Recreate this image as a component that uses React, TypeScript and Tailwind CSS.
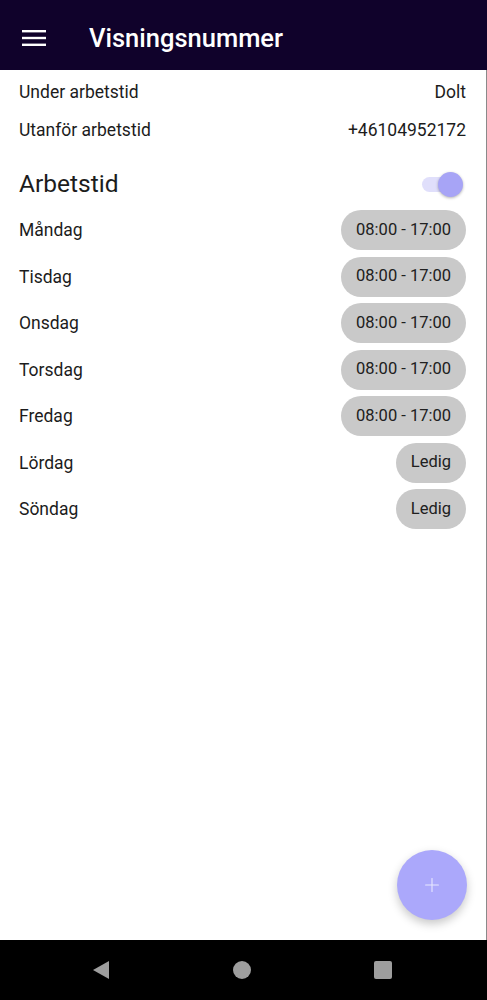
import { Plus } from "lucide-react"

const days = [
  { name: "Måndag", value: "08:00 - 17:00" },
  { name: "Tisdag", value: "08:00 - 17:00" },
  { name: "Onsdag", value: "08:00 - 17:00" },
  { name: "Torsdag", value: "08:00 - 17:00" },
  { name: "Fredag", value: "08:00 - 17:00" },
  { name: "Lördag", value: "Ledig" },
  { name: "Söndag", value: "Ledig" },
]

export default function App() {
  return (
    <div className="flex h-[1000px] w-[487px] flex-col bg-white font-['Roboto',sans-serif] text-[#1c1c1c]">
      {/* App bar */}
      <header className="flex h-[70px] shrink-0 items-center bg-[#10022b] pl-[22px] pt-[6px]">
        <svg width="24" height="16" viewBox="0 0 24 16" className="mr-[43px]">
          <rect x="0" y="0" width="24" height="2.4" fill="white" />
          <rect x="0" y="6.8" width="24" height="2.4" fill="white" />
          <rect x="0" y="13.6" width="24" height="2.4" fill="white" />
        </svg>
        <h1 className="text-[25.5px] font-medium text-white">Visningsnummer</h1>
      </header>

      {/* Content */}
      <main className="relative flex-1 border-r border-[#8a8a8a] pl-[19px] pr-[20px]">
        <div className="flex h-[44px] items-center justify-between text-[17.5px]">
          <span>Under arbetstid</span>
          <span>Dolt</span>
        </div>
        <div className="flex h-[32px] items-center justify-between text-[17.5px]">
          <span>Utanför arbetstid</span>
          <span>+46104952172</span>
        </div>

        <div className="mt-[15px] flex h-[46px] items-center justify-between">
          <h2 className="text-[24.5px]">Arbetstid</h2>
          <div className="relative mr-[3px] h-[25px] w-[41px]">
            <div className="absolute left-0 top-[5px] h-[15px] w-[35px] rounded-full bg-[#e0dffb]" />
            <div className="absolute right-0 top-0 h-[25px] w-[25px] rounded-full bg-[#a7a4f6] shadow-[0_1px_3px_rgba(0,0,0,0.3)]" />
          </div>
        </div>

        <ul className="flex flex-col">
          {days.map((d) => (
            <li key={d.name} className="flex h-[46.5px] items-center justify-between">
              <span className="text-[17.5px]">{d.name}</span>
              <span className="flex h-[40px] items-center rounded-full bg-[#c9c9c9] px-[15px] text-[16.5px] text-[#202020]">
                {d.value}
              </span>
            </li>
          ))}
        </ul>

        <button className="absolute bottom-[20px] right-[19px] flex h-[70px] w-[70px] items-center justify-center rounded-full bg-[#aba8fb] shadow-[0_4px_10px_rgba(0,0,0,0.22)]">
          <Plus size={22} strokeWidth={1.2} color="#e8e7ff" />
        </button>
      </main>

      {/* System nav bar */}
      <nav className="flex h-[60px] shrink-0 items-center gap-[121px] bg-black pl-[91px]">
        <div className="flex h-[20px] w-[20px] items-center justify-center">
          <svg width="20" height="20" viewBox="0 0 20 20">
            <polygon points="18,1 18,19 2,10" fill="#9e9e9e" />
          </svg>
        </div>
        <div className="flex h-[20px] w-[20px] items-center justify-center">
          <div className="h-[18px] w-[18px] rounded-full bg-[#9e9e9e]" />
        </div>
        <div className="flex h-[20px] w-[20px] items-center justify-center">
          <div className="h-[18px] w-[18px] rounded-[2px] bg-[#9e9e9e]" />
        </div>
      </nav>
    </div>
  )
}
